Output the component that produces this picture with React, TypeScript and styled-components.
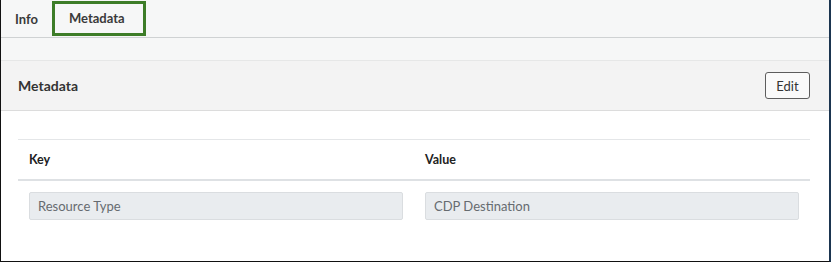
import React from "react";
import styled, { createGlobalStyle } from "styled-components";

const GlobalStyle = createGlobalStyle`
  body {
    margin: 0;
    background: #ffffff;
    font-family: Lato, "Open Sans", "Noto Sans", sans-serif;
  }
`;

const Frame = styled.div`
  width: 828px;
  height: 261px;
  border-left: 1px solid #111;
  border-right: 2px solid #1b3550;
  border-bottom: 1px solid #111;
  background: #f6f7f7;
  display: flex;
  flex-direction: column;
`;

const TabBar = styled.ul`
  display: flex;
  align-items: flex-end;
  height: 38px;
  margin: 0;
  padding: 0;
  list-style: none;
  border-bottom: 1px solid #cfd2d3;
  box-sizing: border-box;
`;

const Tab = styled.li<{ $active?: boolean }>`
  display: flex;
  align-items: center;
  box-sizing: border-box;
  height: 35px;
  margin-bottom: 1px;
  padding: ${(p) => (p.$active ? "0 18px 2px 14px" : "0 14px 0 14px")};
  border: ${(p) => (p.$active ? "3px solid #3d7d28" : "none")};
  font-size: 13px;
  font-weight: 700;
  color: #3a3a3a;
  cursor: pointer;
`;

const Spacer = styled.div`
  height: 22px;
`;

const Card = styled.section`
  flex: 1;
  display: flex;
  flex-direction: column;
  border-top: 1px solid #e6e7e7;
  background: #ffffff;
`;

const CardHeader = styled.header`
  display: flex;
  align-items: center;
  justify-content: space-between;
  height: 49px;
  padding: 0 19px 0 17px;
  background: #f3f3f3;
  border-bottom: 1px solid #dcdcdc;
`;

const Title = styled.h2`
  margin: 0;
  font-size: 14px;
  font-weight: 700;
  color: #333;
`;

const EditButton = styled.button`
  width: 45px;
  height: 27px;
  padding: 0;
  border: 1px solid #5d5d5d;
  border-radius: 3px;
  background: #fafafa;
  font-family: inherit;
  font-size: 13px;
  color: #333;
`;

const CardBody = styled.div`
  padding: 28px 19px 0 17px;
`;

const Table = styled.table`
  width: 100%;
  table-layout: fixed;
  border-collapse: collapse;
  border-top: 1px solid #e4e6e8;
`;

const HeadCell = styled.th`
  height: 39px;
  padding: 0 11px;
  text-align: left;
  font-size: 12.5px;
  font-weight: 700;
  color: #222;
  border-bottom: 2px solid #dee1e4;
`;

const Cell = styled.td`
  padding: 11px 11px 10px;
`;

const Field = styled.input`
  display: block;
  width: 100%;
  height: 28px;
  box-sizing: border-box;
  padding: 0 8px;
  border: 1px solid #dadde0;
  border-radius: 2px;
  background: #e9ecef;
  font-family: inherit;
  font-size: 13px;
  color: #666b70;
`;

const rows = [{ key: "Resource Type", value: "CDP Destination" }];

const App = () => {
  const [active, setActive] = React.useState("metadata");

  return (
    <>
      <GlobalStyle />
      <Frame>
        <TabBar role="tablist">
          <Tab $active={active === "info"} onClick={() => setActive("info")}>
            Info
          </Tab>
          <Tab
            $active={active === "metadata"}
            onClick={() => setActive("metadata")}
          >
            Metadata
          </Tab>
        </TabBar>
        <Spacer />
        <Card>
          <CardHeader>
            <Title>Metadata</Title>
            <EditButton type="button">Edit</EditButton>
          </CardHeader>
          <CardBody>
            <Table>
              <thead>
                <tr>
                  <HeadCell>Key</HeadCell>
                  <HeadCell>Value</HeadCell>
                </tr>
              </thead>
              <tbody>
                {rows.map((row) => (
                  <tr key={row.key}>
                    <Cell>
                      <Field readOnly value={row.key} />
                    </Cell>
                    <Cell>
                      <Field readOnly value={row.value} />
                    </Cell>
                  </tr>
                ))}
              </tbody>
            </Table>
          </CardBody>
        </Card>
      </Frame>
    </>
  );
};

export default App;
